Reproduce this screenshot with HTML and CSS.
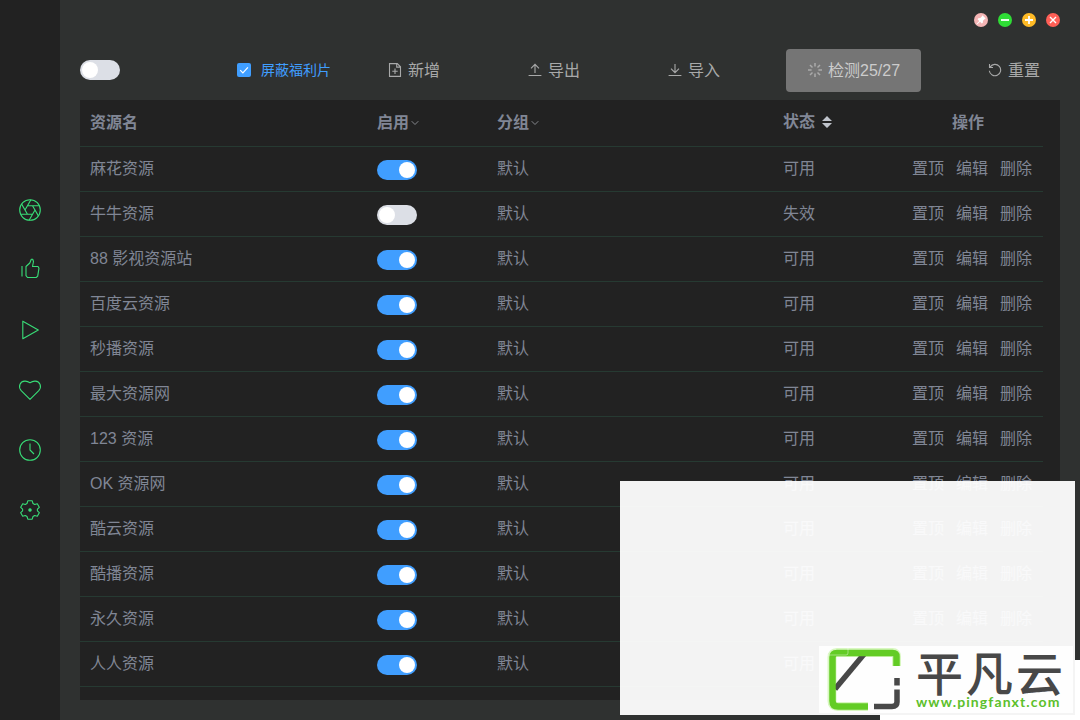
FILE: index.html
```html
<!DOCTYPE html>
<html lang="zh">
<head>
  <meta charset="UTF-8">
  <meta name="viewport" content="width=device-width, initial-scale=1.0">
  <title>资源管理</title>
  <link rel="stylesheet" href="styles.css">
</head>
<body>
  <div class="app">
    <aside class="sidebar">
      <svg class="nav-icon" viewBox="0 0 24 24"><circle cx="12" cy="12" r="10.3"/><path d="M9.5 7.700h11.800M14.500 7.700l5.900 10.200M17 12l-5.900 10.200M14.500 16.300H2.700M9.500 16.300L3.600 6.100M7 12l5.900-10.200"/></svg>
      <svg class="nav-icon nav-like" viewBox="0 0 24 24"><path d="M4 10v10.500M8 10.500v9.200l1.500 1.800h8.700l1.500-1.300 1.300-8-1-1.700h-5.500l1-5-.8-2.200h-1.400l-1.500 3.700z"/></svg>
      <svg class="nav-icon" viewBox="0 0 24 24"><path d="M4.800 3.200v17.600L20.300 12z"/></svg>
      <svg class="nav-icon" viewBox="0 0 24 24"><path d="M12 21.300L3.200 12.700C-.2 8.500 2 3.400 6.700 3.100c2.500-.2 3.700.5 5.300 1.600 1.600-1.100 2.800-1.800 5.300-1.600 4.700.3 6.900 5.400 3.500 9.600z"/></svg>
      <svg class="nav-icon" viewBox="0 0 24 24"><circle cx="12" cy="12" r="10.300"/><path d="M12 5.500V12l4 4"/></svg>
      <svg class="nav-icon" viewBox="0 0 24 24"><path d="M9.800 2.800h4.400l.8 2.700 1.700 1 2.600-.8 2 3.600-1.900 1.900v1.600l1.900 1.900-2 3.600-2.600-.8-1.700 1-.8 2.700H9.800L9 18.500l-1.700-1-2.600.8-2-3.600 1.900-1.900v-1.600L2.700 9.300l2-3.600 2.600.8 1.700-1z"/><circle class="dot" cx="12" cy="12" r="1.200"/></svg>
    </aside>

    <main class="main">
      <div class="window-bar">
        <span class="win-btn pin"><svg viewBox="0 0 14 14"><path class="fill" d="M8.400 2.300l3.300 3.300-1 .4-1.700 1.700-.2 2-1 .7-1.700-1.700L3 11.600l-.5-.5L5.300 8 3.600 6.300l.7-1 2-.2L8 3.300z"/></svg></span>
        <span class="win-btn min"><svg viewBox="0 0 14 14"><path d="M3 7h8"/></svg></span>
        <span class="win-btn max"><svg viewBox="0 0 14 14"><path d="M3 7h8M7 3v8"/></svg></span>
        <span class="win-btn close"><svg viewBox="0 0 14 14"><path d="M4 4l6 6M10 4l-6 6"/></svg></span>
      </div>

      <div class="toolbar">
        <span class="switch"></span>
        <label class="checkbox">
          <span class="box"><svg viewBox="0 0 14 14"><path d="M3.200 7.200l2.700 2.700 5-5.500"/></svg></span>
          <span class="check-label">屏蔽福利片</span>
        </label>
        <button class="btn"><svg viewBox="0 0 14 14"><path d="M1.500.6h7.800l3.200 3.200v9.600h-11zM8.700.6v3.500h3.800M4.300 8.200h5.400M7 5.500v5.400"/></svg>新增</button>
        <button class="btn"><svg viewBox="0 0 14 14"><path d="M.6 12.500h12.800M7 10V1.500M3 5.400l4-4 4 4"/></svg>导出</button>
        <button class="btn"><svg viewBox="0 0 14 14"><path d="M.6 12.500h12.800M7 1v8.500M3 5.700l4 4 4-4"/></svg>导入</button>
        <button class="btn checking"><svg viewBox="0 0 14 14"><path d="M7 0v3.600M7 10.400V14M0 7h3.600M10.400 7H14M2 2l2.500 2.500M9.500 9.500L12 12M2 12l2.500-2.500M9.500 4.500L12 2"/></svg>检测25/27</button>
        <button class="btn"><svg viewBox="0 0 14 14"><path d="M2.200 3.900a5.700 5.700 0 1 1-.9 3.900M1.500 1v3.500H5"/></svg>重置</button>
      </div>

      <div class="table">
        <div class="row head">
          <span>资源名</span>
          <span>启用<svg class="arrow" viewBox="0 0 8 6"><path d="M.7 1.200L4 4.500l3.300-3.300"/></svg></span>
          <span>分组<svg class="arrow" viewBox="0 0 8 6"><path d="M.7 1.200L4 4.500l3.300-3.300"/></svg></span>
          <span class="status">状态<svg class="sort" viewBox="0 0 10 12"><path d="M0 5l5-5 5 5zM0 7h10l-5 5z"/></svg></span>
          <span class="ops-title">操作</span>
        </div>
        <div id="rows"></div>
      </div>
    </main>

    <div class="veil"></div>
    <div class="edge edge-right"></div>
    <div class="edge edge-bottom"></div>
    <div class="brand">
      <svg class="brand-mark" viewBox="0 0 72 60">
        <path class="glow" d="M67.500 16V6.500q0-4-4-4H8q-5 0-5 5V51q0 5.500 5.500 5.500H39"/>
        <path class="dark" d="M36 3L6 39"/>
        <path class="green" d="M67.500 16V6.500q0-3.500-4-3.500H8q-4.500 0-4.500 4.500V51q0 5.500 5.500 5.500h30"/>
        <path class="dark" d="M68 28v7.500M68 39.500V52q0 4.500-5 4.500H45"/>
        <rect class="tag" x="-6" y="-3.500" width="25" height="8.500" rx="2"/>
      </svg>
      <div class="brand-text">
        <div class="brand-name">平凡云</div>
        <div class="brand-url">www.pingfanxt.com</div>
      </div>
    </div>
  </div>

  <script>
    const sites = ['麻花资源', '牛牛资源', '88 影视资源站', '百度云资源', '秒播资源', '最大资源网',
      '123 资源', 'OK 资源网', '酷云资源', '酷播资源', '永久资源', '人人资源'];

    // 牛牛资源 is switched off and marked invalid
    document.getElementById('rows').innerHTML = sites.map((name, i) => {
      const active = name !== '牛牛资源';
      // the last row has no room for actions, the brand covers it
      const ops = i < sites.length - 1 ? '<a>置顶</a><a>编辑</a><a>删除</a>' : '';
      return `<div class="row">
        <span>${name}</span>
        <span><i class="switch ${active ? 'on' : ''}"></i></span>
        <span>默认</span>
        <span>${active ? '可用' : '失效'}</span>
        <span class="ops">${ops}</span>
      </div>`;
    }).join('');
  </script>
</body>
</html>
```

FILE: styles.css
```css
* {
  box-sizing: border-box;
}
body {
  margin: 0;
  font-family: "Liberation Sans", "Noto Sans CJK SC", sans-serif;
  font-size: 16px;
  color: #808695;
  background-color: #2f3130;
}
svg {
  display: block;
  fill: none;
  flex: none;
}
.app {
  position: relative;
  display: flex;
  width: 1080px;
  height: 720px;
  overflow: hidden;
}

/* sidebar */
.sidebar {
  flex: none;
  width: 60px;
  padding-top: 198px;
  background-color: #222222;
  display: flex;
  flex-direction: column;
  align-items: center;
  gap: 36px;
}
.nav-icon {
  width: 24px;
  height: 24px;
  stroke: #38dd77;
  stroke-width: 1.1;
  stroke-linejoin: round;
}
.nav-like {
  margin: -2px 0 2px;
}
.nav-icon .dot {
  fill: #38dd77;
}

.main {
  flex: none;
  width: 1020px;
  padding: 0 20px 20px;
  display: flex;
  flex-direction: column;
}

/* window buttons */
.window-bar {
  height: 40px;
  display: flex;
  justify-content: flex-end;
  align-items: center;
  gap: 10px;
}
.win-btn {
  width: 14px;
  height: 14px;
  border-radius: 50%;
}
.win-btn svg {
  stroke: #ffffff;
  stroke-width: 1.8;
}
.win-btn.close svg {
  stroke-width: 1.4;
}
.win-btn .fill {
  fill: #ffffff;
  stroke: none;
}
.pin { background-color: #f4b5b5; }
.min { background-color: #2fdc35; }
.max { background-color: #ffbb26; }
.close { background-color: #ff5f56; }

/* toolbar */
.toolbar {
  height: 60px;
  display: flex;
  align-items: center;
}
.switch {
  display: block;
  flex: none;
  width: 40px;
  height: 20px;
  padding: 2px;
  border-radius: 10px;
  background-color: #dcdfe6;
}
.switch::after {
  content: "";
  display: block;
  width: 16px;
  height: 16px;
  border-radius: 50%;
  background-color: #ffffff;
}
.switch.on {
  background-color: #409eff;
}
.switch.on::after {
  margin-left: auto;
}
.checkbox {
  margin: 0 38px 0 117px;
  display: flex;
  align-items: center;
  gap: 10px;
  width: 93px;
  font-size: 14px;
  white-space: nowrap;
  color: #409eff;
}
.check-label {
  padding-bottom: 2px;
}
.box {
  flex: none;
  width: 14px;
  height: 14px;
  border-radius: 2px;
  background-color: #409eff;
}
.box svg {
  stroke: #ffffff;
  stroke-width: 1.2;
}
.btn {
  display: flex;
  align-items: center;
  gap: 6px;
  width: 93px;
  height: 43px;
  margin: 1px 47px 0 0;
  padding: 0 0 3px 20px;
  border: none;
  background: none;
  font: inherit;
  color: #a8a9a9;
  white-space: nowrap;
  flex: none;
}
.btn svg {
  width: 14px;
  height: 14px;
  margin-top: 2px;
  stroke: #a8a9a9;
  stroke-width: 1.1;
}
.btn.checking {
  width: 135px;
  margin-left: -2px;
  padding-left: 22px;
  border-radius: 4px;
  background-color: #757575;
  color: #cccccc;
}
.btn.checking svg {
  stroke: #aaaaaa;
  stroke-width: 1.5;
}
.btn:last-child {
  margin-right: 0;
}

/* table */
.table {
  flex: 1;
  padding-right: 17px;
  background-color: #222222;
}
.row {
  display: grid;
  grid-template-columns: 287px 120px 286px 120px 150px;
  align-items: center;
  height: 45px;
  padding-bottom: 5px;
  border-bottom: 1px solid #263a32;
}
.row > span {
  padding-left: 10px;
}
.row .switch {
  margin-top: 6px;
}
.head {
  height: 47px;
  font-weight: bold;
  padding-bottom: 4px;
}
.head > span {
  display: flex;
  align-items: center;
}
.arrow {
  width: 8px;
  height: 6px;
  margin: 4px 0 0 2px;
  stroke: #85878c;
}
.sort {
  width: 10px;
  height: 12px;
  margin: 3px 0 0 7px;
  fill: #c0c4cc;
}
.head .status {
  padding-bottom: 2px;
}
.row .ops-title {
  padding: 0;
  justify-content: center;
}
.row .ops {
  display: flex;
  justify-content: flex-end;
  gap: 12px;
  padding-right: 11px;
}

/* notice panel and brand over the table */
.veil {
  position: absolute;
  left: 620px;
  top: 481px;
  width: 455px;
  height: 234px;
  background-color: rgba(255, 255, 255, 0.95);
}
.edge {
  position: absolute;
  right: 0;
  bottom: 0;
  background-color: #ffffff;
}
.edge-right {
  width: 5px;
  height: 60px;
}
.edge-bottom {
  width: 200px;
  height: 5px;
}
.brand {
  position: absolute;
  left: 819px;
  top: 646px;
  width: 254px;
  height: 67px;
  padding: 4px 0 0 10px;
  background-color: #fefefe;
  display: flex;
  gap: 15px;
}
.brand-mark {
  width: 72px;
  height: 60px;
  stroke-width: 6.5;
  overflow: visible;
}
.brand-mark .green {
  stroke: #63cc25;
}
.brand-mark .glow {
  stroke: #d8f7c0;
  stroke-width: 9;
}
.brand-mark .dark {
  stroke: #484848;
  stroke-width: 5.5;
}
.brand-mark .tag {
  stroke: #ffffff;
  stroke-width: 0.8;
  stroke-opacity: 0.5;
}
.brand-name {
  font-family: "Noto Sans CJK SC", sans-serif;
  font-size: 47px;
  line-height: 41px;
  letter-spacing: 3px;
  font-weight: 500;
  color: #484848;
  white-space: nowrap;
}
.brand-url {
  padding-top: 2px;
  font-family: Lato, sans-serif;
  font-size: 14px;
  line-height: 18px;
  font-weight: bold;
  letter-spacing: 1.1px;
  color: #5cc02b;
}
```
